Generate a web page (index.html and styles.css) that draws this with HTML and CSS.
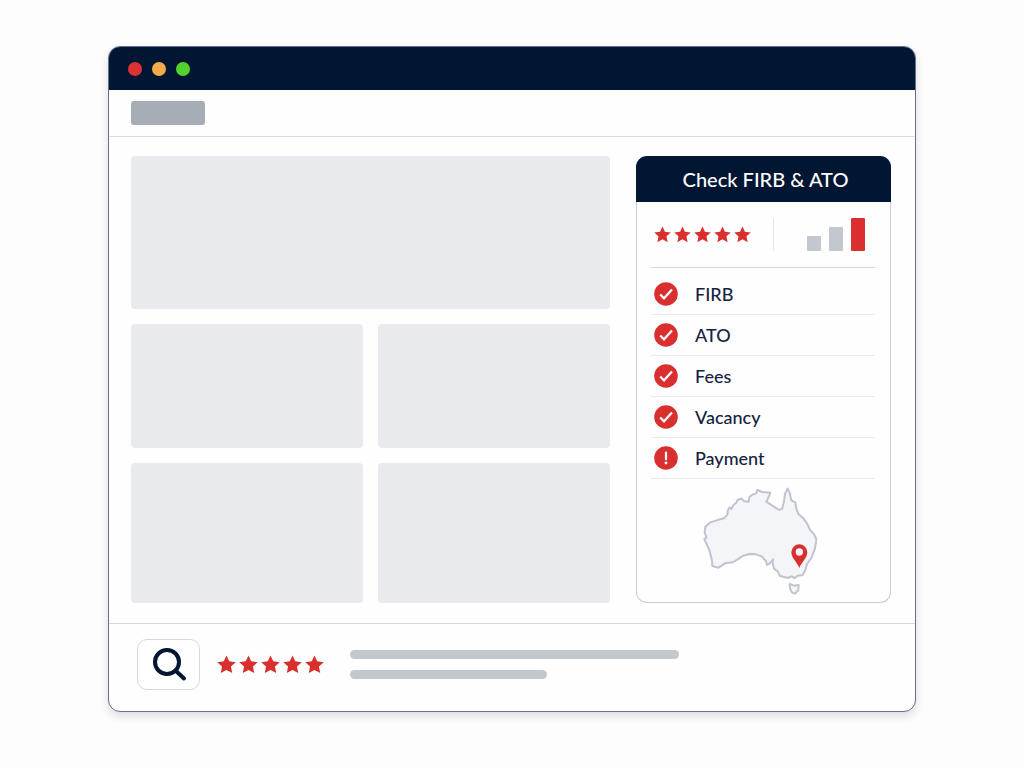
FILE: index.html
```html
<!DOCTYPE html>
<html lang="en">
<head>
<meta charset="utf-8">
<meta name="viewport" content="width=device-width, initial-scale=1">
<title>Check FIRB &amp; ATO</title>
<link rel="stylesheet" href="styles.css">
</head>
<body>
<svg class="defs" width="0" height="0" aria-hidden="true">
  <symbol id="star" viewBox="0 0 20 20"><path d="M10 .6l2.900 6.100 6.800.8-5 4.700 1.300 6.800L10 15.700l-6 3.300 1.300-6.800-5-4.700 6.800-.8z"/></symbol>
  <symbol id="check" viewBox="0 0 24 24"><circle cx="12" cy="12" r="11.8"/><path class="mark" d="M6.200 12.400l3.800 3.900 8-8.800"/></symbol>
  <symbol id="alert" viewBox="0 0 24 24"><circle cx="12" cy="12" r="11.8"/><path class="mark" d="M12 6.600v6.600" stroke-linecap="round"/><circle class="dot" cx="12" cy="17" r="1.4"/></symbol>
</svg>
<main class="window">
  <header class="titlebar">
    <span class="light light-red"></span>
    <span class="light light-amber"></span>
    <span class="light light-green"></span>
  </header>
  <div class="toolbar"><span class="brand"></span></div>
  <div class="content">
    <section class="tiles">
      <div class="tile tile-wide"></div>
      <div class="tile"></div>
      <div class="tile"></div>
      <div class="tile"></div>
      <div class="tile"></div>
    </section>
    <aside class="card">
      <h1 class="card-title">Check FIRB &amp; ATO</h1>
      <div class="card-body">
        <div class="summary">
          <div class="stars" role="img" aria-label="5 stars">
            <svg><use href="#star"/></svg><svg><use href="#star"/></svg><svg><use href="#star"/></svg><svg><use href="#star"/></svg><svg><use href="#star"/></svg>
          </div>
          <div class="chart">
            <span class="bar bar-low"></span>
            <span class="bar bar-mid"></span>
            <span class="bar bar-high"></span>
          </div>
        </div>
        <ul class="checks">
          <li><svg><use href="#check"/></svg>FIRB</li>
          <li><svg><use href="#check"/></svg>ATO</li>
          <li><svg><use href="#check"/></svg>Fees</li>
          <li><svg><use href="#check"/></svg>Vacancy</li>
          <li><svg><use href="#alert"/></svg>Payment</li>
        </ul>
        <svg class="map" viewBox="36 15 366 336" role="img" aria-label="Map of Australia">
          <path class="land" d="M46 140L61 127 80 121 102 115 112 104 114 90 119 82 124 87 130 75 138 69 143 60 154 55 163 64 176 65 178 51 187 44 199 40 202 30 217 36 241 38 236 51 229 65 247 77 268 90 277 85 282 64 285 42 293 26 299 38 304 61 316 67 319 86 326 103 341 116 353 134 359 148 373 164 379 178 375 205 364 234 351 252 345 272 338 285 324 287 314 294 304 289 294 294 270 288 263 274 252 266 248 250 249 238 239 250 231 255 228 243 216 230 199 223 179 222 160 227 143 238 128 247 105 250 86 263 67 258 66 242 58 210 48 188 43 178 49 173 44 156Z"/>
          <path class="land" d="M299 312L313 317 326 315 325 330 315 341 306 338 300 326Z"/>
          <path class="pin" fill-rule="evenodd" d="M328 264C323 249 304 234 304 217A24 24 0 0 1 352 217C352 234 333 249 328 264ZM328 205A11 11 0 1 0 328 227A11 11 0 1 0 328 205Z"/>
        </svg>
      </div>
    </aside>
  </div>
  <footer class="footer">
    <button class="search" type="button" aria-label="Search">
      <svg viewBox="0 0 36 36"><circle cx="16" cy="15" r="12"/><path d="M25 24l8 7.500"/></svg>
    </button>
    <div class="stars stars-large" role="img" aria-label="5 stars">
      <svg><use href="#star"/></svg><svg><use href="#star"/></svg><svg><use href="#star"/></svg><svg><use href="#star"/></svg><svg><use href="#star"/></svg>
    </div>
    <div class="lines">
      <span class="line"></span>
      <span class="line line-short"></span>
    </div>
  </footer>
</main>
</body>
</html>
```
FILE: styles.css
```css
:root {
  --navy: #011632;
  --red: #d9302f;
  --grey: #c3c7ce;
  --rule: #dadde2;
}

* { box-sizing: border-box; }

body {
  margin: 0;
  padding: 46px 108px;
  background: #fdfdfd;
  color: #14233f;
  font-family: Lato, "Open Sans", sans-serif;
}

svg { display: block; }
.defs { position: absolute; }

.window {
  overflow: hidden;
  border: 1px solid #66738a;
  border-radius: 12px;
  background: #fefefe;
  box-shadow: 0 4px 8px rgba(20, 30, 50, 0.14);
}

.titlebar {
  display: flex;
  align-items: center;
  gap: 10px;
  height: 43px;
  padding: 0 19px;
  background: var(--navy);
}

.light {
  width: 14px;
  height: 14px;
  border-radius: 50%;
}
.light-red { background: #dc3231; }
.light-amber { background: #f3aa4c; }
.light-green { background: #52d22c; }

.toolbar {
  padding: 11px 22px;
  border-bottom: 1px solid var(--rule);
}

.brand {
  display: block;
  width: 74px;
  height: 24px;
  border-radius: 3px;
  background: #a7adb7;
}

.content {
  display: grid;
  grid-template-columns: 1fr 255px;
  gap: 26px;
  padding: 19px 24px 20px 22px;
}

.tiles {
  display: grid;
  grid-template-columns: 1fr 1fr;
  grid-template-rows: 153fr 124fr 140fr;
  gap: 15px;
}

.tile {
  border-radius: 4px;
  background: #e9eaed;
}
.tile-wide { grid-column: 1 / -1; }

.card-title {
  margin: 0;
  padding: 0 0 0 4px;
  border-radius: 11px 11px 0 0;
  background: var(--navy);
  color: #fff;
  font-size: 20px;
  font-weight: 500;
  line-height: 46px;
  text-align: center;
}

.card-body {
  padding: 0 15px 5px 14px;
  border: 1px solid #c9cdd6;
  border-top: 0;
  border-radius: 0 0 11px 11px;
}

.summary {
  display: flex;
  align-items: center;
  justify-content: space-between;
  padding: 16px 10px 16px 3px;
  border-bottom: 1px solid #d3d7de;
}

.stars {
  display: flex;
  gap: 3px;
  fill: var(--red);
}
.stars svg {
  width: 17px;
  height: 17px;
}
.stars-large svg {
  width: 19px;
  height: 19px;
}

.chart {
  display: flex;
  flex: 1;
  align-items: flex-end;
  justify-content: flex-end;
  gap: 8px;
  height: 33px;
  margin-left: 22px;
  border-left: 1px solid #e3e5ea;
}

.bar {
  width: 14px;
  border-radius: 1px;
  background: var(--grey);
}
.bar-low { height: 15px; }
.bar-mid { height: 24px; }
.bar-high {
  height: 33px;
  background: var(--red);
}

.checks {
  margin: 0;
  padding: 6px 0 0;
  list-style: none;
  font-size: 18px;
  font-weight: 500;
}
.checks li {
  display: flex;
  align-items: center;
  gap: 17px;
  height: 41px;
  padding-left: 3px;
  border-bottom: 1px solid #e8eaee;
}
.checks svg {
  width: 24px;
  height: 24px;
  fill: var(--red);
}
.mark {
  fill: none;
  stroke: #fff;
  stroke-width: 2.2;
}
.dot { fill: #fff; }

.map {
  width: 122px;
  height: 112px;
  margin: 6px auto 0;
}
.land {
  fill: #f4f5f8;
  stroke: #bfc4ce;
  stroke-width: 6;
  stroke-linejoin: round;
}
.pin { fill: var(--red); }

.footer {
  display: flex;
  align-items: center;
  padding: 15px 28px 21px;
  border-top: 1px solid #d3d7de;
}

.search {
  display: grid;
  place-items: center;
  width: 63px;
  height: 51px;
  margin-right: 17px;
  padding: 0;
  border: 1px solid #d6d9e0;
  border-radius: 10px;
  background: #fff;
}
.search svg {
  width: 36px;
  height: 36px;
  fill: none;
  stroke: var(--navy);
  stroke-width: 4;
  stroke-linecap: round;
}

.lines {
  display: grid;
  flex: 1;
  gap: 11px;
  max-width: 329px;
  margin-left: 26px;
}
.line {
  height: 9px;
  border-radius: 5px;
  background: var(--grey);
}
.line-short { width: 60%; }
```
